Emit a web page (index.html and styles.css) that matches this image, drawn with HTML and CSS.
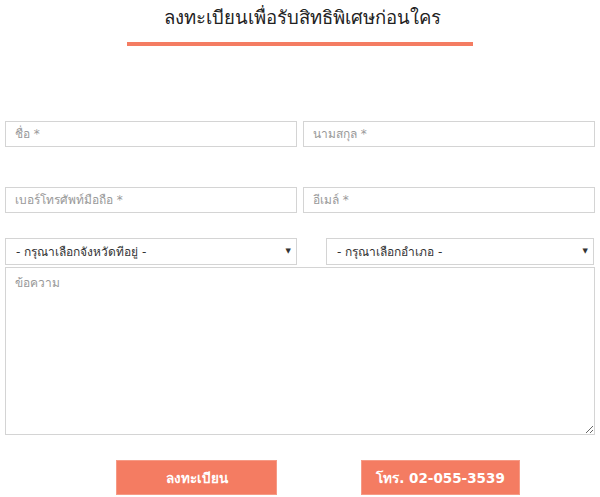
FILE: index.html
```html
<!DOCTYPE html>
<html lang="th">
<head>
    <meta charset="UTF-8">
    <meta name="viewport" content="width=device-width, initial-scale=1.0">
    <title>ลงทะเบียน</title>
    <link rel="stylesheet" href="styles.css">
</head>
<body>
    <div class="registro">
        <h2 class="titulo">ลงทะเบียนเพื่อรับสิทธิพิเศษก่อนใคร</h2>
        <div class="linea"></div>

        <form class="formulario">
            <div class="fila fila-uno">
                <input type="text" placeholder="ชื่อ *">
                <input type="text" placeholder="นามสกุล *">
            </div>
            <div class="fila fila-dos">
                <input type="text" placeholder="เบอร์โทรศัพท์มือถือ *">
                <input type="text" placeholder="อีเมล์ *">
            </div>
            <div class="fila fila-selects">
                <div class="select select-provincia">
                    <select>
                        <option>- กรุณาเลือกจังหวัดที่อยู่ -</option>
                    </select>
                </div>
                <div class="select select-amphoe">
                    <select>
                        <option>- กรุณาเลือกอำเภอ -</option>
                    </select>
                </div>
            </div>
            <textarea placeholder="ข้อความ"></textarea>

            <div class="botones">
                <button type="button" class="boton boton-registro">ลงทะเบียน</button>
                <button type="button" class="boton boton-tel">โทร. 02-055-3539</button>
            </div>
        </form>
    </div>
</body>
</html>
```

FILE: styles.css
```css
:root {
    --naranja: #f47c62;
    --borde: #d4d4d4;
}

body {
    margin: 0;
    background: #fff;
    font-family: Tahoma, "DejaVu Sans", "Noto Sans", sans-serif;
}

.registro {
    padding: 0 5px;
}

.titulo {
    margin: 0;
    padding-top: 4px;
    padding-left: 4px;
    text-align: center;
    font-size: 18.5px;
    line-height: 28px;
    font-weight: 500;
    color: #222;
}

.linea {
    width: 346px;
    height: 4px;
    margin: 10px auto 0;
    background: var(--naranja);
}

.formulario {
    display: flex;
    flex-direction: column;
}

.fila {
    display: flex;
    gap: 6px;
}

.fila-uno {
    margin-top: 75px;
}

.fila-dos {
    margin-top: 40px;
}

.fila-selects {
    margin-top: 25px;
    gap: 29px;
}

input, select, textarea {
    box-sizing: border-box;
    border: 1px solid var(--borde);
    background: #fff;
    font-family: inherit;
    font-size: 12px;
    color: #444;
    outline: none;
}

input {
    flex: 1;
    height: 26px;
    padding: 0 9px;
}

input::placeholder, textarea::placeholder {
    color: #999;
}

.select {
    position: relative;
    height: 27px;
}

.select-provincia {
    width: 292px;
}

.select-amphoe {
    flex: 1;
    margin-right: 1px;
}

.select select {
    width: 100%;
    height: 100%;
    padding: 0 10px;
    appearance: none;
    -webkit-appearance: none;
    border-radius: 0;
    font-size: 12px;
    color: #333;
}

.select::after {
    content: "▼";
    position: absolute;
    right: 6px;
    top: 9px;
    font-size: 7px;
    color: #333;
    pointer-events: none;
}

textarea {
    margin-top: 2px;
    height: 168px;
    padding: 5px 9px;
    resize: vertical;
}

.botones {
    display: flex;
    gap: 84px;
    margin-top: 25px;
    padding-left: 111px;
}

.boton {
    height: 35px;
    border: 1px solid #f69a85;
    background: var(--naranja);
    color: #fff;
    font-family: inherit;
    font-size: 13.5px;
    font-weight: bold;
    cursor: pointer;
}

.boton-registro {
    width: 161px;
}

.boton-tel {
    width: 159px;
}
```
